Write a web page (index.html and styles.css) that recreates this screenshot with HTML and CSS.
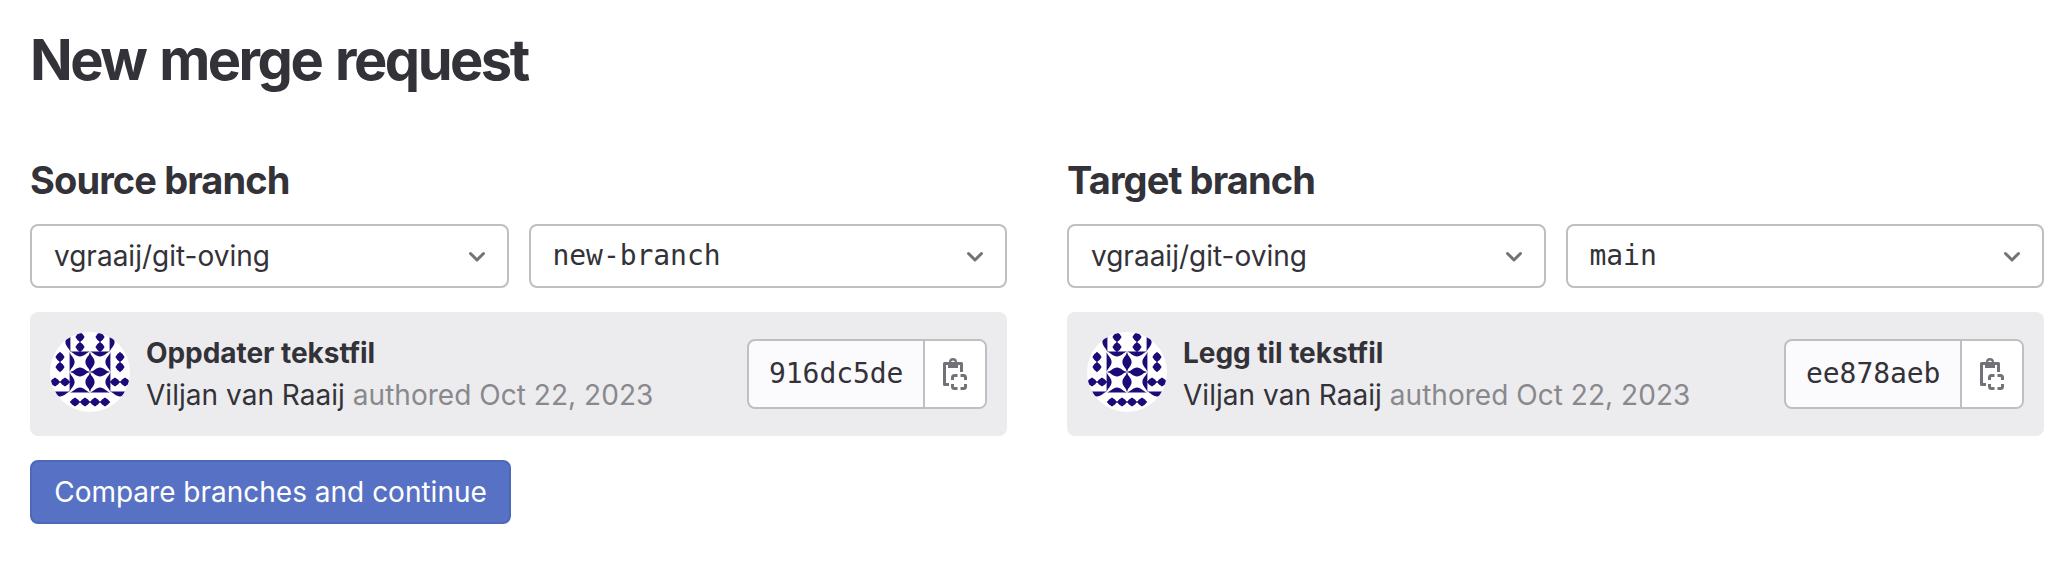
FILE: index.html
```html
<!DOCTYPE html>
<html lang="en">
<head>
<meta charset="utf-8">
<title>New merge request</title>
<link rel="stylesheet" href="styles.css">
</head>
<body>
<svg width="0" height="0" class="defs" aria-hidden="true">
  <defs>
    <symbol id="chevron" viewBox="0 0 16 16"><path d="M4.75 6.75 8 10l3.25-3.25" fill="none" stroke="currentColor" stroke-width="1.5" stroke-linecap="round" stroke-linejoin="round"/></symbol>
    <symbol id="copy" viewBox="0 0 16 16">
      <path fill="none" stroke="currentColor" stroke-width="1.5" stroke-linejoin="round" d="M5 13.25H2.75V2.750h8.500V7"/>
      <path fill="currentColor" fill-rule="evenodd" d="M4.500 2H5a2 2 0 0 1 4 0h.5v3h-5zM7 1.250a1 1 0 1 0 0 2 1 1 0 0 0 0-2z"/>
      <path fill="none" stroke="currentColor" stroke-width="1.5" d="M6.750 11V9.750a1 1 0 0 1 1-1h1.500M10.750 8.750h1.500a1 1 0 0 1 1 1V11M13.250 13v1.250a1 1 0 0 1-1 1h-1.500M9.250 15.250h-1.500a1 1 0 0 1-1-1V13"/>
    </symbol>
    <path id="gem" d="M0-5.300Q1.200-3.800 2.600-3Q3.600-1.300 4.600 0Q3.600 1.300 2.600 3Q1.200 3.800 0 5.300Q-1.200 3.800-2.600 3Q-3.600 1.300-4.600 0Q-3.600-1.300-2.600-3Q-1.200-3.800 0-5.300z"/>
    <g id="pair"><use href="#gem" y="-5"/><use href="#gem" y="5"/></g>
    <path id="half" d="M-10-.4C-6.500 .6-4 4.600 0 4.600S6.500 .6 10-.4z"/>
    <g id="tile">
      <use href="#half" transform="translate(10 0)"/>
      <use href="#half" transform="translate(20 10) rotate(90)"/>
      <use href="#half" transform="translate(10 20) rotate(180)"/>
      <use href="#half" transform="translate(0 10) rotate(270)"/>
    </g>
    <symbol id="identicon" viewBox="0 0 80 80">
      <rect width="80" height="80" fill="#fff"/>
      <g fill="#1b0a78">
        <use href="#pair" x="30" y="10"/><use href="#pair" x="50" y="10"/>
        <use href="#pair" x="10" y="30"/><use href="#pair" x="70" y="30"/>
        <use href="#pair" transform="translate(10 50) rotate(90)"/><use href="#pair" transform="translate(70 50) rotate(90)"/>
        <use href="#pair" transform="translate(30 70) rotate(90)"/><use href="#pair" transform="translate(50 70) rotate(90)"/>
        <use href="#half" transform="translate(20 10) rotate(90)"/><use href="#half" transform="translate(60 10) rotate(270)"/>
        <use href="#half" transform="translate(10 60)"/><use href="#half" transform="translate(70 60)"/>
        <use href="#tile" x="20" y="20"/><use href="#tile" x="40" y="20"/>
        <use href="#tile" x="20" y="40"/><use href="#tile" x="40" y="40"/>
      </g>
    </symbol>
  </defs>
</svg>
<main class="page">
  <h1 class="title">New merge request</h1>
  <div class="branches">
    <section class="branch">
      <h2 class="heading">Source branch</h2>
      <div class="selects">
        <button class="select"><span class="project">vgraaij/git-oving</span><svg class="icon"><use href="#chevron"/></svg></button>
        <button class="select"><span class="mono">new-branch</span><svg class="icon"><use href="#chevron"/></svg></button>
      </div>
      <div class="commit">
        <svg class="avatar"><use href="#identicon"/></svg>
        <div class="info">
          <div class="message">Oppdater tekstfil</div>
          <div class="meta"><span class="author">Viljan van Raaij</span> authored Oct 22, 2023</div>
        </div>
        <div class="hash"><span class="sha mono">916dc5de</span><button class="copy"><svg class="icon"><use href="#copy"/></svg></button></div>
      </div>
    </section>
    <section class="branch">
      <h2 class="heading">Target branch</h2>
      <div class="selects">
        <button class="select"><span class="project">vgraaij/git-oving</span><svg class="icon"><use href="#chevron"/></svg></button>
        <button class="select"><span class="mono">main</span><svg class="icon"><use href="#chevron"/></svg></button>
      </div>
      <div class="commit">
        <svg class="avatar"><use href="#identicon"/></svg>
        <div class="info">
          <div class="message">Legg til tekstfil</div>
          <div class="meta"><span class="author">Viljan van Raaij</span> authored Oct 22, 2023</div>
        </div>
        <div class="hash"><span class="sha mono">ee878aeb</span><button class="copy"><svg class="icon"><use href="#copy"/></svg></button></div>
      </div>
    </section>
  </div>
  <button class="submit">Compare branches and continue</button>
</main>
</body>
</html>
```

FILE: styles.css
```css
* { box-sizing: border-box; }
body { margin: 0; background: #fff; color: #333238; font: 28px/40px Inter, sans-serif; }
button { font: inherit; color: inherit; margin: 0; }
.defs { display: block; position: absolute; }
.page { padding: 24px 26px 0 30px; }
.title { margin: 0; font-size: 56px; line-height: 72px; font-weight: 700; letter-spacing: -2.5px; word-spacing: 3px; }
.branches { display: grid; grid-template-columns: 1fr 1fr; gap: 60px; margin-top: 60px; }
.heading { margin: 0 0 20px; font-size: 38px; line-height: 48px; font-weight: 700; letter-spacing: -0.88px; }
.selects { display: grid; grid-template-columns: 1fr 1fr; gap: 20px; }
.select { display: flex; align-items: center; justify-content: space-between; height: 64px; padding: 0 14px 0 22px; border: 2px solid #bfbfc3; border-radius: 8px; background: #fff; }
.icon { display: block; width: 32px; height: 32px; color: #737278; }
.mono { font-family: "DejaVu Sans Mono", monospace; font-size: 28px; letter-spacing: -0.06px; }
.commit { display: flex; align-items: center; height: 124px; margin-top: 24px; padding: 0 20px; border-radius: 8px; background: #ececef; }
.avatar { width: 80px; height: 80px; border-radius: 50%; margin: 0 16px 4px 0; }
.info { flex: 1; line-height: 42px; }
.message { font-weight: 700; letter-spacing: -0.05px; }
.meta { color: #89888d; letter-spacing: 0.03px; }
.author { color: #333238; }
.hash { display: flex; height: 70px; width: 240px; border: 2px solid #bfbfc3; border-radius: 8px; background: #fbfafd; overflow: hidden; }
.sha { flex: 1; padding-left: 20px; line-height: 66px; }
.copy { display: flex; align-items: center; justify-content: center; width: 62px; padding: 0; border: 0; border-left: 2px solid #bfbfc3; background: #fff; }
.submit { display: block; height: 64px; width: 481px; margin-top: 24px; padding: 0; border: 2px solid #4c68b8; border-radius: 8px; background: #5772c4; color: #fff; }
```
